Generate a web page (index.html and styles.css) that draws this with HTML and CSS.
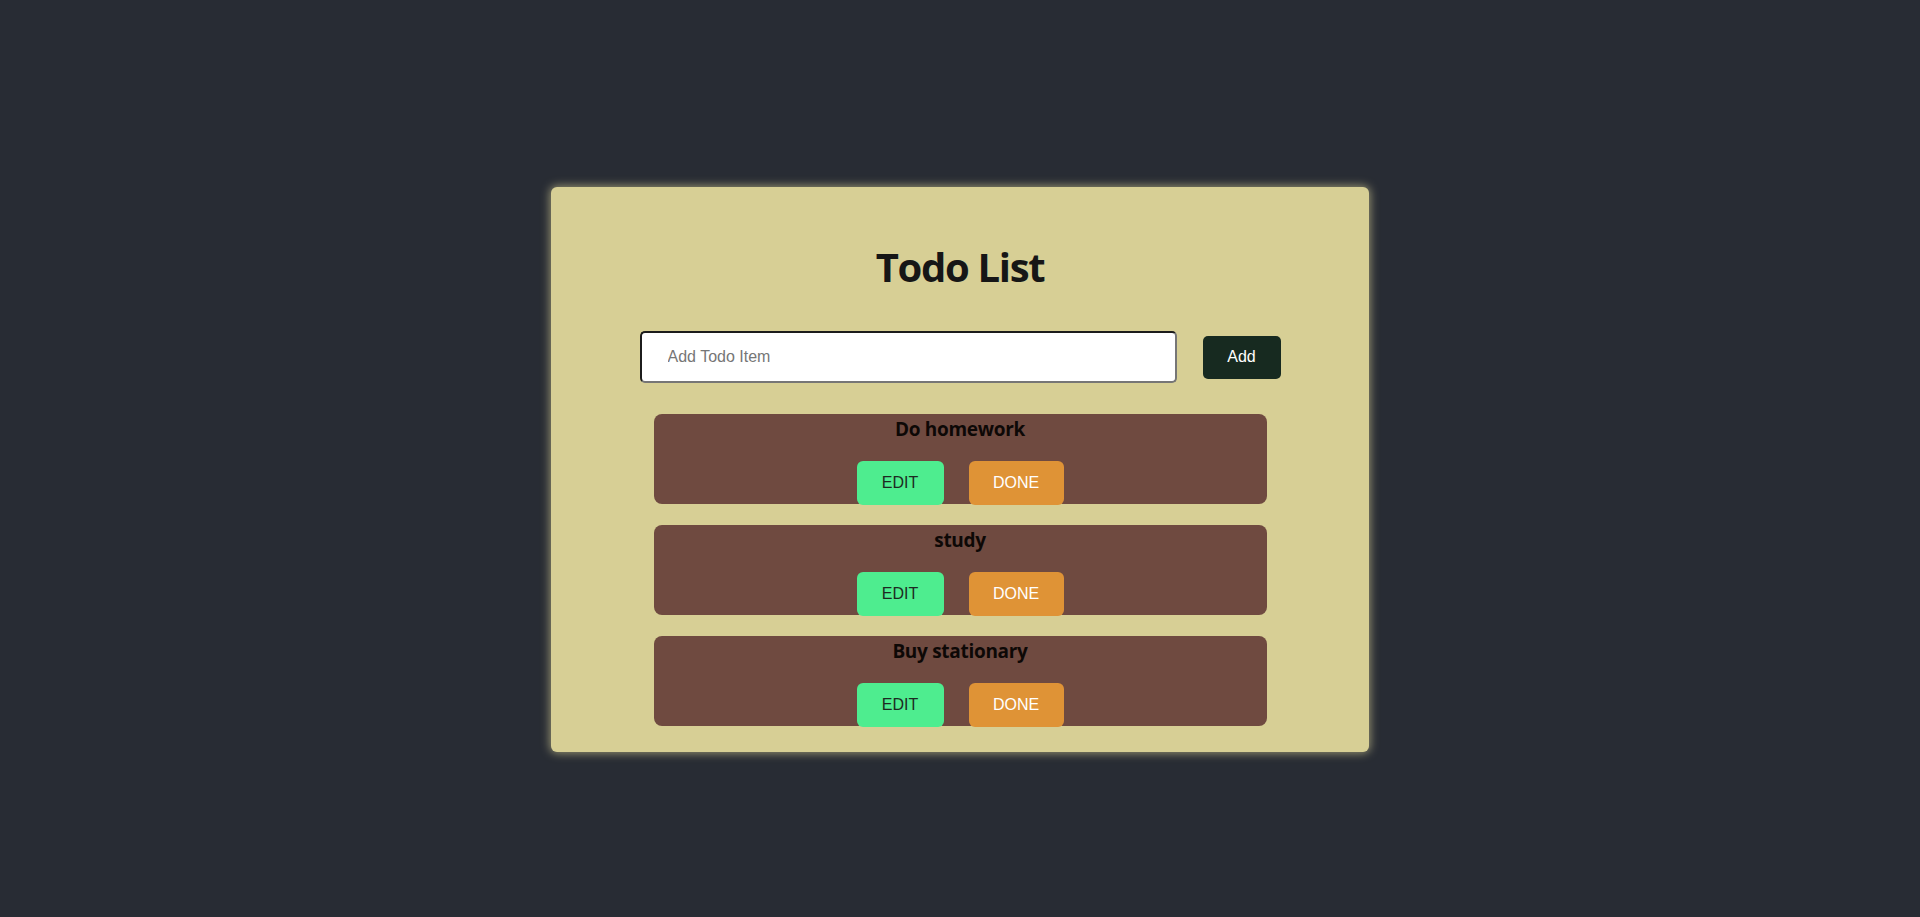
FILE: index.html
```html
<!DOCTYPE html>
<html lang="en">
<head>
<meta charset="utf-8">
<title>Todo List</title>
<link rel="stylesheet" href="styles.css">
</head>
<body>
  <main class="card">
    <h1 class="title">Todo List</h1>
    <form class="add-form">
      <input class="add-input" type="text" placeholder="Add Todo Item">
      <button class="add-btn" type="button">Add</button>
    </form>
    <ul class="todo-list">
      <li class="todo">
        <h3 class="todo-text">Do homework</h3>
        <div class="todo-actions">
          <button class="btn btn-edit" type="button">EDIT</button>
          <button class="btn btn-done" type="button">DONE</button>
        </div>
      </li>
      <li class="todo">
        <h3 class="todo-text">study</h3>
        <div class="todo-actions">
          <button class="btn btn-edit" type="button">EDIT</button>
          <button class="btn btn-done" type="button">DONE</button>
        </div>
      </li>
      <li class="todo">
        <h3 class="todo-text">Buy stationary</h3>
        <div class="todo-actions">
          <button class="btn btn-edit" type="button">EDIT</button>
          <button class="btn btn-done" type="button">DONE</button>
        </div>
      </li>
    </ul>
  </main>
</body>
</html>
```
FILE: styles.css
```css
* { box-sizing: border-box; }
html, body {
  margin: 0;
  height: 100%;
}
body {
  background: #282c34;
  font-family: "Liberation Sans", Arial, sans-serif;
  overflow: hidden;
}
.card {
  width: 818px;
  margin: 187px auto 0;
  background: #d7cf95;
  border-radius: 6px;
  box-shadow: 0 0 10px 1px rgba(215, 207, 149, 0.65);
  padding: 0 0 26px;
  display: flex;
  flex-direction: column;
  align-items: center;
}
.title {
  margin: 55.5px 0 0;
  font-family: "Open Sans", "Noto Sans", sans-serif;
  font-weight: 700;
  font-size: 40px;
  line-height: 48px;
  color: #161616;
  letter-spacing: -1.3px;
}
.add-form {
  margin-top: 40.5px;
  display: flex;
  align-items: center;
  gap: 26px;
}
.add-input {
  width: 537px;
  height: 52px;
  border: 2px solid;
  border-color: #1c1c1c #767676 #767676 #1c1c1c;
  border-radius: 5px;
  background: #fff;
  padding: 0 26px;
  font-family: "Liberation Sans", Arial, sans-serif;
  font-size: 16px;
  color: #222;
  outline: none;
}
.add-input::placeholder { color: #767676; }
.add-btn {
  width: 78px;
  height: 43px;
  border: none;
  border-radius: 5px;
  background: #172a20;
  color: #fff;
  font-family: "Liberation Sans", Arial, sans-serif;
  font-size: 16px;
  padding: 0;
}
.todo-list {
  list-style: none;
  margin: 31px 0 0;
  padding: 0;
  display: flex;
  flex-direction: column;
  gap: 21px;
}
.todo {
  width: 613px;
  height: 90px;
  background: #6f4a40;
  border-radius: 8px;
  padding-top: 3px;
  display: flex;
  flex-direction: column;
  align-items: center;
}
.todo-text {
  margin: 0;
  font-family: "Open Sans", "Noto Sans", sans-serif;
  font-weight: 700;
  font-size: 19px;
  line-height: 24px;
  color: #0d0806;
  letter-spacing: -0.3px;
}
.todo-actions {
  margin-top: 20px;
  display: flex;
  gap: 25px;
}
.btn {
  height: 44px;
  border: none;
  border-radius: 6px;
  font-family: "Liberation Sans", Arial, sans-serif;
  font-size: 16px;
  padding: 0;
}
.btn-edit {
  width: 87px;
  background: #4eed8f;
  color: #1d2a22;
}
.btn-done {
  width: 95px;
  background: #df9336;
  color: #fff;
}
```
